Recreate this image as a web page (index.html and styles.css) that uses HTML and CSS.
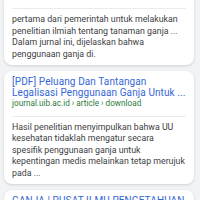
FILE: index.html
```html
<!DOCTYPE html>
<html lang="id">
<head>
<meta charset="utf-8">
<link rel="stylesheet" href="styles.css">
</head>
<body>
<div class="list">
  <div class="card cut">
    <div class="divider"></div>
    <div class="snippet">pertama dari pemerintah untuk melakukan penelitian ilmiah tentang tanaman ganja ... Dalam jurnal ini, dijelaskan bahwa penggunaan ganja di.</div>
  </div>
  <div class="card">
    <div class="title">[PDF] Peluang Dan Tantangan Legalisasi Penggunaan Ganja Untuk&nbsp;...</div>
    <div class="url">journal.uib.ac.id › article › download</div>
    <div class="divider"></div>
    <div class="snippet">Hasil penelitian menyimpulkan bahwa UU kesehatan tidaklah mengatur secara spesifik penggunaan ganja untuk kepentingan medis melainkan tetap merujuk pada ...</div>
  </div>
  <div class="card">
    <div class="title single">GANJA | PUSAT ILMU PENGETAHUAN</div>
  </div>
</div>
</body>
</html>
```
FILE: styles.css
```css
html, body {
  margin: 0;
  padding: 0;
  background: #f1f3f4;
  font-family: Roboto, "Liberation Sans", Arial, sans-serif;
}
.list {
  display: flex;
  flex-direction: column;
  gap: 6px;
  padding: 0 6px 0 4px;
}
.card {
  background: #fff;
  border-radius: 8px;
  box-shadow: 0 1px 3px rgba(0,0,0,0.14);
  padding: 5.5px 8px 4.5px;
}
.card.cut {
  border-top-left-radius: 0;
  border-top-right-radius: 0;
  padding-top: 8px;
}
.title {
  color: #3566d6;
  font-size: 10px;
  line-height: 11px;
  letter-spacing: 0.1px;
}
.title.single {
  white-space: nowrap;
  overflow: hidden;
}
.url {
  color: #2b7a3b;
  font-size: 8.2px;
  line-height: 11px;
}
.divider {
  height: 1px;
  background: #ebebeb;
  margin: 6.5px 0 5px;
}
.card.cut .divider {
  margin-top: 0;
}
.snippet {
  color: #3c4043;
  font-size: 8.8px;
  line-height: 11.5px;
}
```
